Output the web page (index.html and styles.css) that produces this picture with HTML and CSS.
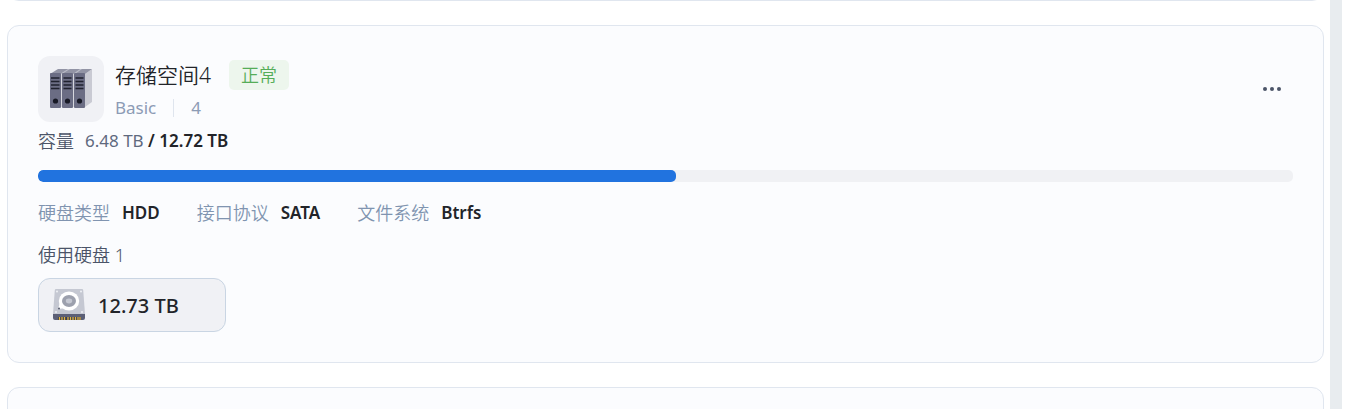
FILE: index.html
```
<!DOCTYPE html>
<html lang="zh-CN">
<head>
    <meta charset="UTF-8">
    <meta name="viewport" content="width=device-width, initial-scale=1.0">
    <title>存储空间</title>
    <link rel="stylesheet" href="styles.css">
</head>
<body>
    <main class="pool-list">
        <section class="card card-prev"></section>

        <section class="card">
            <div class="card-header">
                <div class="pool-icon">
                    <svg width="44" height="40" viewBox="0 0 44 40" aria-hidden="true">
                        <path d="M36 5L43 0V33L36 38Z" fill="#c9cad3"/>
                        <path d="M1 5L9 0H43L36 5Z" fill="#9294a5"/>
                        <path d="M11 5L19 0H21L13 5ZM24 5L31 0H33L26 5Z" fill="#b9bbc7"/>
                        <path d="M11 5H13V38H11ZM23 5H26V38H23Z" fill="#d6d7de"/>
                        <rect x="1" y="4" width="11" height="35" rx="1" fill="#6b6d84"/>
                        <rect x="13" y="4" width="11" height="35" rx="1" fill="#6b6d84"/>
                        <rect x="25" y="4" width="11" height="35" rx="1" fill="#6b6d84"/>
                        <path d="M2 9H10.500M2 12.500H10.500M2 16H10.500M2 19.500H10.500M14.500 9H22.500M14.500 12.500H22.500M14.500 16H22.500M14.500 19.500H22.500M26.500 9H34.500M26.500 12.500H34.500M26.500 16H34.500M26.500 19.500H34.500" stroke="#20222f" stroke-width="1.6"/>
                        <circle cx="6.5" cy="32" r="2.6" fill="#171925"/>
                        <circle cx="18.5" cy="32" r="2.6" fill="#171925"/>
                        <circle cx="30.5" cy="32" r="2.6" fill="#171925"/>
                    </svg>
                </div>
                <div class="pool-info">
                    <div class="pool-title">
                        <h2>存储空间4</h2>
                        <span class="status">正常</span>
                    </div>
                    <div class="pool-meta">
                        <span>Basic</span>
                        <span class="divider"></span>
                        <span>4</span>
                    </div>
                </div>
                <button class="more-button" type="button" aria-label="更多">
                    <svg width="20" height="6" viewBox="0 0 20 6" fill="#4b5468">
                        <circle cx="3" cy="3" r="2"/>
                        <circle cx="10" cy="3" r="2"/>
                        <circle cx="17" cy="3" r="2"/>
                    </svg>
                </button>
            </div>

            <div class="capacity">
                <span class="capacity-label">容量</span>
                <span class="capacity-used">6.48 TB <strong>/ 12.72 TB</strong></span>
            </div>
            <div class="progress">
                <div class="progress-bar" style="width: 50.8%"></div>
            </div>

            <dl class="details">
                <div class="detail"><dt>硬盘类型</dt><dd>HDD</dd></div>
                <div class="detail"><dt>接口协议</dt><dd>SATA</dd></div>
                <div class="detail"><dt>文件系统</dt><dd>Btrfs</dd></div>
            </dl>

            <div class="disk-count">使用硬盘 <span>1</span></div>
            <div class="disk">
                <svg width="34" height="34" viewBox="0 0 34 34" aria-hidden="true">
                    <path d="M4 1H30Q31 1 31.2 2L33 26H1L2.8 2Q3 1 4 1Z" fill="#c5c8d2"/>
                    <path d="M1 26H33V30Q33 32 31 32H3Q1 32 1 30Z" fill="#5b5f76"/>
                    <path d="M6 29H29V32H6Z" fill="#393c4e"/>
                    <path d="M7.5 29V32M10 29V32M12.500 29V32M16 29V32M18.500 29V32M21 29V32M23.500 29V32M26 29V32M28 29V32" stroke="#e0b443" stroke-width="1.3"/>
                    <circle cx="5" cy="3.5" r="1" fill="#eef0f4"/>
                    <circle cx="29" cy="3.5" r="1" fill="#eef0f4"/>
                    <circle cx="4" cy="24" r="1" fill="#eef0f4"/>
                    <circle cx="30" cy="24" r="1" fill="#eef0f4"/>
                    <path d="M6 21L8 15L14 20Z" fill="#fff"/>
                    <ellipse cx="17" cy="13" rx="10.2" ry="9.5" fill="#fff"/>
                    <ellipse cx="17" cy="13" rx="7" ry="6" fill="#9ca0ad"/>
                    <ellipse cx="17" cy="13" rx="3.2" ry="2.4" fill="#c5c8d2"/>
                    <circle cx="7" cy="20.5" r="1" fill="#555a6c"/>
                </svg>
                <span>12.73 TB</span>
            </div>
        </section>

        <section class="card card-next"></section>
    </main>
</body>
</html>
```
FILE: styles.css
```
* {
    box-sizing: border-box;
}

body {
    margin: 0;
    padding-right: 14px;
    height: 100vh;
    overflow: hidden;
    background-color: #fff;
    color: #222429;
    font-family: "Noto Sans", "Noto Sans CJK SC", sans-serif;
    font-size: 17px;
}

.pool-list {
    display: flex;
    flex-direction: column;
    gap: 24px;
    height: 100vh;
    padding: 0 6px 0 7px;
    border-right: 12px solid #e8ecef;
    overflow: hidden;
}

.card {
    flex-shrink: 0;
    padding: 30px;
    background-color: #fbfcfe;
    border: 1px solid #e0e6ef;
    border-radius: 12px;
}

/* neighbouring cards, partly scrolled out of view */
.card-prev {
    margin-top: -61px;
}

.card-next {
    min-height: 338px;
}

.card-header {
    display: flex;
    align-items: center;
}

.pool-icon {
    display: flex;
    align-items: center;
    justify-content: center;
    width: 66px;
    height: 66px;
    border-radius: 12px;
    background-color: #f0f1f5;
}

.pool-info {
    flex: 1;
    margin-left: 11px;
    padding-top: 3px;
}

.pool-title {
    display: flex;
    align-items: center;
    gap: 18px;
}

.pool-title h2 {
    margin: 0;
    font-size: 21px;
    font-weight: 350;
    line-height: 32px;
}

.status {
    padding: 0 12px;
    border-radius: 5px;
    background-color: #edf6ed;
    color: #55ad58;
    font-size: 18px;
    font-weight: 350;
    line-height: 30px;
}

.pool-meta {
    display: flex;
    align-items: center;
    gap: 17px;
    margin-top: 3px;
    color: #8c9bb5;
    line-height: 28px;
}

.divider {
    width: 1px;
    height: 18px;
    background-color: #dfe5ee;
}

.more-button {
    display: flex;
    align-items: center;
    padding: 8px 11px;
    border: none;
    background: none;
    cursor: pointer;
}

.capacity {
    display: flex;
    gap: 11px;
    line-height: 38px;
}

.capacity-label,
.disk-count {
    color: #4b5468;
    font-size: 18px;
    font-weight: 350;
}

.capacity-used {
    color: #5f697e;
}

.capacity strong {
    color: #222429;
    font-weight: 600;
}

.progress {
    height: 12px;
    margin-top: 10px;
    border-radius: 5px;
    background-color: #f0f1f4;
    overflow: hidden;
}

.progress-bar {
    height: 100%;
    border-radius: 5px;
    background-color: #2173df;
}

.details {
    display: flex;
    gap: 37px;
    margin: 16px 0 12px;
    line-height: 30px;
}

.detail {
    display: flex;
    gap: 12px;
}

.detail dt {
    color: #8094b0;
    font-size: 18px;
    font-weight: 350;
}

.detail dd {
    margin: 0;
    font-weight: 600;
}

.disk-count {
    line-height: 30px;
}

.disk {
    display: flex;
    align-items: center;
    gap: 12px;
    width: 188px;
    height: 54px;
    margin-top: 8px;
    padding: 0 13px;
    border: 1px solid #c9d5e3;
    border-radius: 12px;
    background-color: #f0f1f5;
    font-size: 20px;
    font-weight: 500;
}
```
